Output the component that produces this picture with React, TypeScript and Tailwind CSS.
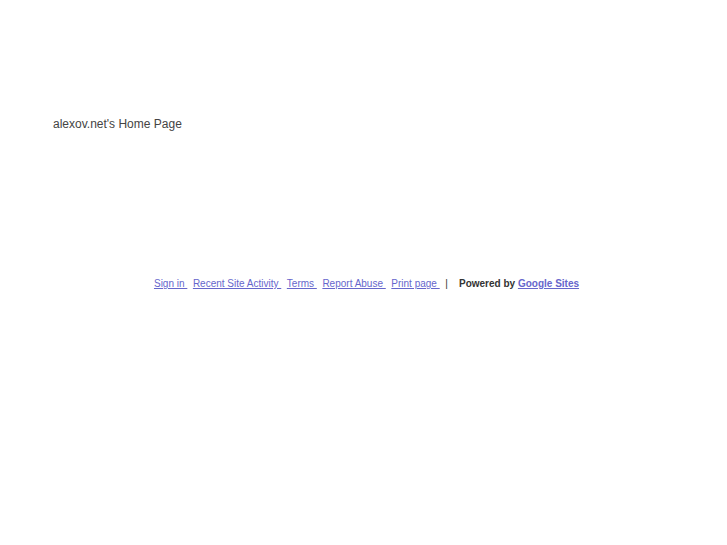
export default function App() {
  const links = ["Sign in", "Recent Site Activity", "Terms", "Report Abuse", "Print page"];
  return (
    <div className="min-h-[545px] bg-white font-['Liberation_Sans',Arial,sans-serif]">
      <div className="pt-[117px] pl-[53px] text-[12px] leading-[14px] text-[#444444]">
        alexov.net's Home Page
      </div>
      <div className="mt-[146px] flex justify-center pl-[6px] text-[10px] leading-[13px] text-[#333333]">
        <div className="flex items-baseline whitespace-pre">
          {links.map((l) => (
            <span key={l}>
              <a href="#" className="text-[#6666cc] underline">
                {l + " "}
              </a>
              {"  "}
            </span>
          ))}
          <span>|{"    "}</span>
          <b>Powered by </b>
          <a href="#" className="font-bold text-[#6666cc] underline">
            Google Sites
          </a>
        </div>
      </div>
    </div>
  );
}
